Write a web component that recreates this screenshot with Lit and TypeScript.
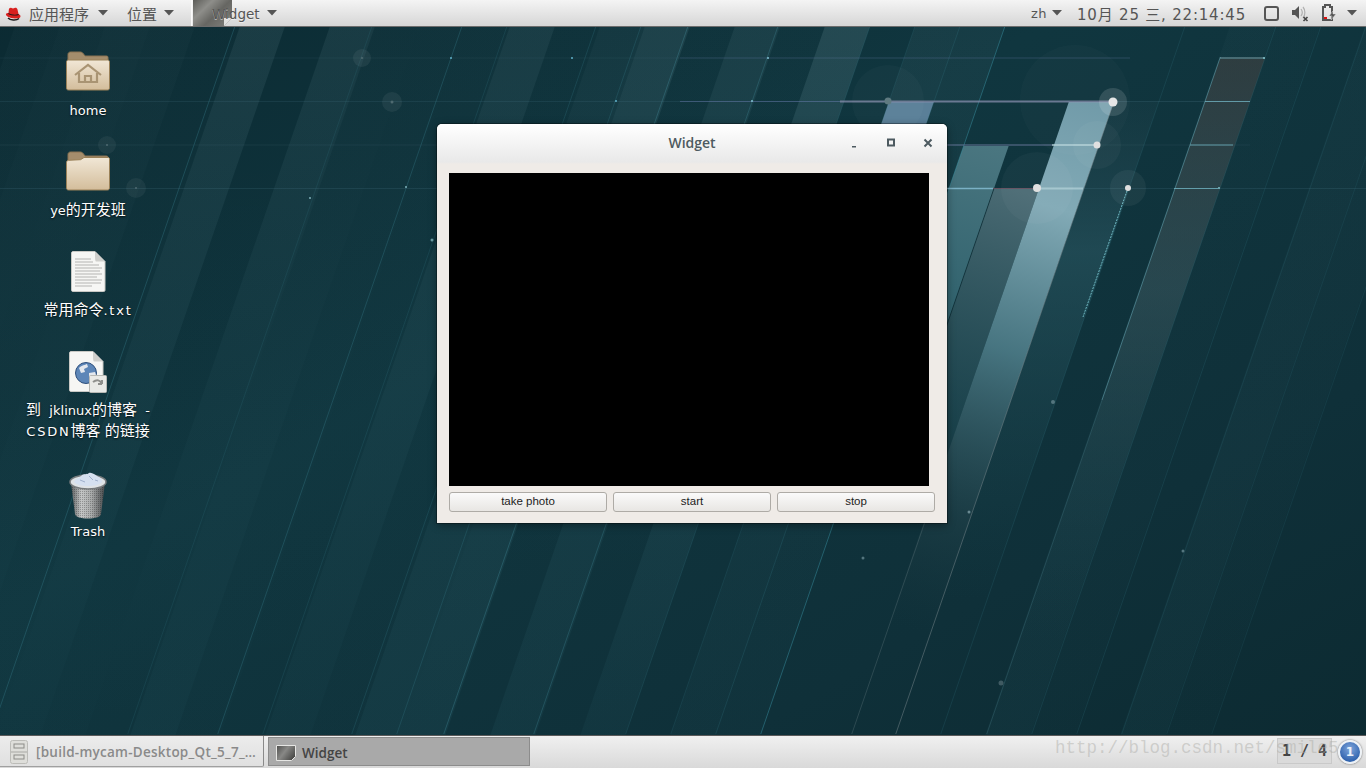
import { LitElement, html, css, svg } from 'lit'
import { customElement } from 'lit/decorators.js'

// wallpaper columns all lean the same way and sit on a 45px grid
const SLOPE = 0.345
const xAt = (x0: number, y: number) => x0 - SLOPE * y

const poly = (x0: number, w: number, y0: number, y1: number, fill: string) => {
	const pts = [
		[xAt(x0, y0), y0],
		[xAt(x0 + w, y0), y0],
		[xAt(x0 + w, y1), y1],
		[xAt(x0, y1), y1],
	]
	return svg`<polygon points=${pts.map((p) => p.join(',')).join(' ')} fill=${fill} />`
}

const edge = (x0: number, y0: number, y1: number, color: string, op = 1, w = 1) =>
	svg`<line x1=${xAt(x0, y0)} y1=${y0} x2=${xAt(x0, y1)} y2=${y1} stroke=${color} stroke-width=${w} opacity=${op} />`

// [x0, opacity at top, opacity at bottom]
const COLUMNS: [number, number, number][] = [
	[24, 0.02, 0.02], [69, 0.03, 0.03], [114, 0.04, 0.01], [159, 0.03, 0.03], [204, 0.01, 0.02],
	[249, 0.08, 0.02], [294, 0, 0.01], [339, 0.07, 0], [384, 0.02, 0.04], [429, 0.02, 0.01],
	[474, 0.02, 0], [519, 0.07, 0.03], [564, 0.01, 0.01], [609, 0.04, 0.06], [654, 0.09, 0.06],
	[699, 0.01, 0], [744, 0.07, 0.05], [789, 0.01, 0], [834, 0.12, 0.04], [924, 0.05, 0.03],
	[969, 0.04, 0.02], [1239, 0.02, 0.04], [1284, 0.01, 0.015], [1374, 0.02, 0.04], [1419, 0.02, 0.015],
]

// [x0, colour, opacity]
const LINES: [number, string, number][] = [
	[244, '#3f8c9c', 0.3], [381, '#3f8c9c', 0.14], [471, '#3f8c9c', 0.28], [516, '#3f8c9c', 0.16],
	[605, '#3f8c9c', 0.2], [650, '#3f8c9c', 0.22], [697, '#4a9aaa', 0.3], [787, '#4a9aaa', 0.26],
	[879, '#3f8c9c', 0.16], [924, '#3f8c9c', 0.14], [969, '#3f8c9c', 0.18], [1014, '#3f9fb2', 0.42],
	[1194, '#3f8c9c', 0.16], [1285, '#3f8c9c', 0.16], [1330, '#3f8c9c', 0.16], [1375, '#3f8c9c', 0.14],
	[1420, '#3f8c9c', 0.12], [1465, '#3f8c9c', 0.12],
]

const HALOS: [number, number, number, number][] = [
	[1075, 100, 55, 0.02], [888, 101, 36, 0.025], [1113, 102, 14, 0.13], [1097, 145, 24, 0.035],
	[1037, 188, 36, 0.03], [1128, 188, 18, 0.05], [362, 58, 9, 0.06], [392, 102, 10, 0.06],
	[107, 145, 9, 0.05], [136, 188, 10, 0.05],
]

const DOTS: [number, number, number, string][] = [
	[1113, 102, 4.5, '#e6e6e6'], [1097, 145, 3.5, '#e0e0e0'], [1037, 188, 4, '#e0e0e0'], [1128, 188, 3, '#e0e0e0'],
	[888, 101, 3.5, '#5f7a80'], [362, 58, 1, '#4f6a70'], [392, 102, 1.5, '#4f6a70'], [107, 145, 1, '#4f6a70'],
	[136, 188, 1, '#4f6a70'], [1053, 402, 2, '#54757e'], [1001, 683, 2.5, '#3f5a62'], [863, 558, 1.5, '#54757e'],
	[1183, 551, 1.5, '#54757e'], [969, 512, 1.5, '#6a8a92'], [310, 198, 1, '#7fb0b8'], [432, 240, 1.5, '#6fa0a8'],
	[406, 187, 1, '#7fb0b8'], [451, 58, 1, '#5fb0c8'], [752, 101, 1, '#7fc0d0'], [768, 58, 1, '#7fc0d0'],
	[616, 101, 1, '#5fb0c8'], [572, 58, 1, '#5fb0c8'], [1264, 58, 1, '#7fc0c8'], [1219, 188, 1, '#7fc0c8'],
]

const wallpaper = html`<svg class="wall" viewBox="0 0 1366 768" width="1366" height="768">
	<defs>
		<linearGradient id="base" x1="0" y1="0" x2="1" y2="1">
			<stop offset="0" stop-color="#0b2a32" />
			<stop offset="0.4" stop-color="#10363f" />
			<stop offset="0.75" stop-color="#0f3039" />
			<stop offset="1" stop-color="#0c2a31" />
		</linearGradient>
		${COLUMNS.map(
			([x, a, b]) => svg`<linearGradient id=${`c${x}`} gradientUnits="userSpaceOnUse" x1="0" y1="27" x2="0" y2="734">
				<stop offset="0" stop-color="#bfe6ee" stop-opacity=${a} />
				<stop offset="1" stop-color="#5fb8c8" stop-opacity=${b} />
			</linearGradient>`,
		)}
		<linearGradient id="hero" gradientUnits="userSpaceOnUse" x1="1090" y1="102" x2="900" y2="730">
			<stop offset="0" stop-color="#6f9aa8" />
			<stop offset="0.17" stop-color="#82aab6" />
			<stop offset="0.4" stop-color="#4d7c88" stop-opacity="0.9" />
			<stop offset="0.68" stop-color="#2a4a52" stop-opacity="0.35" />
			<stop offset="0.85" stop-color="#1d3a42" stop-opacity="0" />
		</linearGradient>
		<linearGradient id="grey" gradientUnits="userSpaceOnUse" x1="1010" y1="188" x2="900" y2="520">
			<stop offset="0" stop-color="#4b6b74" />
			<stop offset="0.8" stop-color="#1d4a54" stop-opacity="0.5" />
			<stop offset="1" stop-color="#1d4a54" stop-opacity="0" />
		</linearGradient>
		<linearGradient id="teal" gradientUnits="userSpaceOnUse" x1="990" y1="146" x2="900" y2="420">
			<stop offset="0" stop-color="#4a7680" />
			<stop offset="1" stop-color="#1f5561" />
		</linearGradient>
		<linearGradient id="side" gradientUnits="userSpaceOnUse" x1="0" y1="102" x2="0" y2="600">
			<stop offset="0" stop-color="#2a4d57" stop-opacity="0.15" />
			<stop offset="0.3" stop-color="#2a5762" stop-opacity="0.6" />
			<stop offset="1" stop-color="#1d4a54" stop-opacity="0" />
		</linearGradient>
		<linearGradient id="rust" gradientUnits="userSpaceOnUse" x1="0" y1="57" x2="0" y2="640">
			<stop offset="0" stop-color="#3a3f40" stop-opacity="0.7" />
			<stop offset="0.4" stop-color="#38545b" stop-opacity="0.55" />
			<stop offset="1" stop-color="#1d4a54" stop-opacity="0" />
		</linearGradient>
	</defs>
	<rect width="1366" height="768" fill="url(#base)" />
	${COLUMNS.map(([x]) => poly(x, 45, 0, 768, `url(#c${x})`))}
	${poly(924, 45, 102, 124, '#5a7f98')}
	${poly(1014, 45, 146, 420, 'url(#teal)')}
	${poly(1059, 45, 188, 540, 'url(#grey)')}
	${poly(1104, 45, 102, 768, 'url(#hero)')}
	${poly(1149, 45, 102, 600, 'url(#side)')}
	${poly(1240, 45, 57, 640, 'url(#rust)')}
	${LINES.map(([x, c, o]) => edge(x, 27, 734, c, o))}
	${edge(1240, 57, 400, '#6fb2c0', 0.5)}
	${edge(1240, 400, 734, '#6fb2c0', 0.18)}
	${edge(1059, 188, 400, '#0b2a32', 0.7)}
	${edge(1105, 480, 734, '#70858a', 0.3)}
	${edge(1149, 102, 734, '#78878c', 0.5)}
	<line x1="1128" y1="188" x2="1083" y2="317" stroke="#7fd0da" stroke-dasharray="2 1" opacity="0.85" />
	<g stroke="#5f8ea0" stroke-width="1" fill="none">
		<line x1="0" y1="58" x2="680" y2="58" opacity="0.1" />
		<line x1="680" y1="58" x2="1130" y2="58" stroke="#6a7db0" opacity="0.3" />
		<line x1="1220" y1="58" x2="1265" y2="58" stroke="#6fb2c0" opacity="0.8" />
		<line x1="0" y1="101.5" x2="680" y2="101.5" opacity="0.14" />
		<line x1="680" y1="101.5" x2="840" y2="101.5" stroke="#6a7db0" opacity="0.5" />
		<line x1="840" y1="101.5" x2="1113" y2="101.5" stroke="#8f93b4" stroke-width="2" opacity="0.7" />
		<line x1="1113" y1="101.5" x2="1205" y2="101.5" opacity="0.2" />
		<line x1="1205" y1="101.5" x2="1250" y2="101.5" stroke="#6fb2c0" opacity="0.8" />
		<line x1="0" y1="145" x2="1250" y2="145" opacity="0.12" />
		<line x1="946" y1="145" x2="1052" y2="145" stroke="#7d87b0" opacity="0.7" />
		<line x1="1052" y1="145" x2="1097" y2="145" stroke="#b6d4dc" stroke-width="2" opacity="0.7" />
		<line x1="1190" y1="145" x2="1233" y2="145" stroke="#6fb2c0" opacity="0.8" />
		<line x1="0" y1="188.5" x2="1366" y2="188.5" opacity="0.16" />
		<line x1="946" y1="188.5" x2="993" y2="188.5" stroke="#7fb8cc" stroke-width="1.5" opacity="0.9" />
		<line x1="993" y1="188.5" x2="1037" y2="188.5" stroke="#6a4a5a" opacity="0.8" />
		<line x1="1037" y1="188.5" x2="1083" y2="188.5" stroke="#b6d4dc" stroke-width="2" opacity="0.7" />
		<line x1="1174" y1="188.5" x2="1218" y2="188.5" stroke="#6fb2c0" opacity="0.8" />
	</g>
	${HALOS.map(([x, y, r, o]) => svg`<circle cx=${x} cy=${y} r=${r} fill="#fff" opacity=${o} />`)}
	${DOTS.map(([x, y, r, c]) => svg`<circle cx=${x} cy=${y} r=${r} fill=${c} />`)}
</svg>`

const folderDefs = svg`<defs><linearGradient id="fld" x1="0" y1="0" x2="0" y2="1"><stop offset="0" stop-color="#f1e7d6" /><stop offset="1" stop-color="#d3bd9b" /></linearGradient></defs>`
const folderBack = svg`<path d="M3 6.5C3 5 4 4 5.5 4H15c1.500 0 2.500.6 3.400 1.800L20 8h21.500c1 0 1.500.5 1.500 1.500V22H3z" fill="#a48d6c" stroke="#8a7352" />`

const homeIcon = html`<svg width="46" height="44" viewBox="0 2 46 44">
	${folderDefs}${folderBack}
	<path d="M1.5 14c0-1.200.7-2 2-2h39c1.300 0 2 .8 2 2v26c0 1.300-.7 2-2 2h-39c-1.300 0-2-.7-2-2z" fill="url(#fld)" stroke="#9a8158" />
	<path d="M10 27l13-10 13 10M14 25v9h18v-9M20 34v-6h6v6" fill="none" stroke="#a99473" stroke-width="2.2" />
</svg>`

const folderIcon = html`<svg width="46" height="42" viewBox="0 2 46 42">
	${folderDefs}${folderBack}
	<path d="M1.5 14.500c0-1.200.7-2 2-2.200l12-.6L19 9.500h24c1 0 1.500.6 1.500 1.500v29c0 1.300-.8 2-2 2H3.500c-1.300 0-2-.8-2-2z" fill="url(#fld)" stroke="#9a8158" />
</svg>`

const page = svg`
	<path d="M1.5 3c0-1 .6-1.500 1.500-1.500h22l10 10V40c0 1-.5 1.500-1.500 1.500H3c-1 0-1.500-.5-1.500-1.500z" fill="#f6f6f4" stroke="#c8c8c4" />
	<path d="M25 1.500c0 6 0 10 1 10h9z" fill="#cfcfcc" />`

const textIcon = html`<svg width="37" height="43" viewBox="0 0 37 43">
	${page}
	<path d="M5 9h16M5 12h18M5 15h24M5 18h27M5 21h25M5 24h27M5 27h22M5 30h27M5 33h26M5 36h17" stroke="#b4b4b2" />
</svg>`

const linkIcon = html`<svg width="40" height="44" viewBox="0 0 40 44">
	${page}
	<circle cx="18" cy="23" r="10.5" fill="#5d86b8" stroke="#2e4f7c" />
	<path d="M11 18c3-3 6-3 8-4l1 3-4 2 1 3-4 1zM21 23l6-1 1 3-4 6-3-3z" fill="#e4e8ee" />
	<rect x="21.5" y="25.5" width="17" height="17" rx="1" fill="#e9e9e6" stroke="#b8b8b4" />
	<path d="M25 32c4-3 7-2 9 2M34 34v-4M34 34h-4" fill="none" stroke="#8f8f8c" stroke-width="2" />
</svg>`

const trashIcon = html`<svg width="40" height="48" viewBox="0 0 40 48">
	<defs>
		<linearGradient id="can" x1="0" y1="0" x2="1" y2="0">
			<stop offset="0" stop-color="#5c5f60" />
			<stop offset="0.3" stop-color="#c4c6c6" />
			<stop offset="0.6" stop-color="#a8aaaa" />
			<stop offset="1" stop-color="#45484a" />
		</linearGradient>
		<pattern id="mesh" width="2" height="2" patternUnits="userSpaceOnUse">
			<rect width="1" height="1" fill="#000" opacity="0.25" />
		</pattern>
	</defs>
	<path d="M3 12l4 31c.3 3 6 4.500 13 4.500s12.700-1.500 13-4.500l4-31z" fill="url(#can)" />
	<path d="M3 12l4 31c.3 3 6 4.500 13 4.500s12.700-1.500 13-4.500l4-31z" fill="url(#mesh)" />
	<ellipse cx="20" cy="11" rx="18" ry="7" fill="#dfe3e6" stroke="#777b7d" stroke-width="1.5" />
	<path d="M6 11c2-4 5-3 7-6 3-3 6-1 8-3 3-1 6 2 8 3 3 1 5 3 5 6-3 3-8 4-14 4s-11-1-14-4z" fill="#d5e0f0" />
	<path d="M12 9l5 2M21 5l4 4M27 9l3 1" stroke="#9fb0cc" fill="none" />
</svg>`

const caret = () => html`<svg class="caret" width="10" height="6" viewBox="0 0 10 6"><path d="M0 0h10L5 5.500z" fill="#555" /></svg>`

const redHat = html`<svg width="16" height="15" viewBox="0 0 16 15">
	<ellipse cx="8" cy="10.5" rx="6.5" ry="4" fill="#ececec" />
	<path d="M1 8c-.5 1.500 2 3.500 7 4.300 5 .8 7.500-.3 7.500-2 0-1-1-1.800-2-2.300L12.500 3.500C12 2 11 1.500 9.500 2 8.500 2.500 7.500 2.500 6.500 2 5 1.500 4 2.500 3.800 4L3.500 7C2.500 7 1.300 7.300 1 8z" fill="#d8201f" />
	<path d="M3.500 7c2.500 1.500 6.500 2.500 10 1l.3 1c-3.500 1.200-7.500.5-10.500-1z" fill="#1a1a1a" />
	<path d="M3 12c2 2 8 3 11 .5" fill="none" stroke="#1a1a1a" stroke-width="1.5" />
</svg>`

const thumb = html`<svg class="thumb" width="41" height="26" viewBox="0 0 41 26">
	<defs>
		<linearGradient id="th" x1="0" y1="0" x2="1" y2="0.7">
			<stop offset="0" stop-color="#5c5c58" />
			<stop offset="0.35" stop-color="#8e8e8a" />
			<stop offset="0.65" stop-color="#666662" />
			<stop offset="1" stop-color="#7a7a76" />
		</linearGradient>
	</defs>
	<path d="M2 0h39v18l-8 8H2z" fill="url(#th)" />
	<path d="M33 26l8-8h-8z" fill="#e0e0de" />
	<path d="M0 0h1.5v26H0z" fill="#fafafa" />
</svg>`

const cabinet = html`<svg class="tico" width="18" height="24" viewBox="0 0 18 24">
	<rect x="0.5" y="0.5" width="17" height="23" rx="2" fill="#dedeDA" stroke="#bcbcb8" />
	<path d="M1 12h16" stroke="#a8a8a4" />
	<rect x="4" y="4" width="10" height="4" fill="none" stroke="#8c8c88" />
	<rect x="4" y="15" width="10" height="4" fill="none" stroke="#8c8c88" />
</svg>`

const taskThumb = html`<svg class="tico" width="20" height="16" viewBox="0 0 20 16">
	<defs>
		<linearGradient id="tt" x1="0" y1="0" x2="1" y2="0.6">
			<stop offset="0" stop-color="#4e4e4c" />
			<stop offset="0.5" stop-color="#888886" />
			<stop offset="1" stop-color="#4c4c4a" />
		</linearGradient>
	</defs>
	<path d="M.5 .5h19v11l-4 4H.5z" fill="url(#tt)" stroke="#e6e6e4" />
</svg>`

@customElement('app-root')
export class AppRoot extends LitElement {
	static styles = css`
		:host {
			display: flex;
			flex-direction: column;
			position: relative;
			width: 1366px;
			height: 768px;
			overflow: hidden;
			font-family: 'DejaVu Sans', 'Noto Sans CJK SC', sans-serif;
		}
		.wall {
			position: absolute;
			inset: 0;
		}

		.top {
			position: relative;
			display: flex;
			align-items: center;
			height: 26px;
			flex: none;
			background: linear-gradient(#f4f4f4, #d6d6d6);
			border-bottom: 1px solid #6c6c6c;
			color: #555;
			font-size: 15px;
		}
		.caret {
			display: block;
			flex: none;
		}
		.menu {
			display: flex;
			align-items: center;
			gap: 7px;
			white-space: nowrap;
		}
		.apps {
			margin-left: 5px;
			gap: 9px;
			font-family: 'Noto Sans CJK SC', sans-serif;
		}
		.apps svg:first-child {
			margin-right: -1px;
		}
		.places {
			margin-left: 19px;
			font-family: 'Noto Sans CJK SC', sans-serif;
		}
		.winitem {
			position: relative;
			height: 26px;
			margin-left: 17px;
			padding-left: 21px;
			font-size: 13.5px;
		}
		.thumb {
			position: absolute;
			left: 0;
			top: 0;
		}
		.winitem span {
			position: relative;
			top: 1px;
			text-shadow: 0 1px 0 rgba(255, 255, 255, 0.5);
		}
		.spacer {
			flex: 1;
		}
		.tray {
			display: flex;
			align-items: center;
			margin-right: 9px;
		}
		.lang {
			display: flex;
			align-items: center;
			gap: 5px;
			font-size: 13px;
			letter-spacing: 0.5px;
		}
		.clock {
			margin: 0 18px 0 15px;
			font-size: 15px;
			letter-spacing: 0.8px;
			white-space: nowrap;
		}
		.trayicons {
			display: flex;
			align-items: center;
			gap: 12px;
		}
		.trayicons .caret {
			margin-left: -2px;
		}

		.desk {
			position: relative;
			flex: 1;
			min-height: 0;
		}
		.icons {
			display: flex;
			flex-direction: column;
			gap: 29px;
			width: 176px;
			padding-top: 23px;
			align-items: center;
		}
		.item {
			display: flex;
			flex-direction: column;
			align-items: center;
			width: 130px;
		}
		.glyph {
			display: flex;
			align-items: flex-start;
			justify-content: center;
			height: 48px;
			margin-bottom: 2px;
		}
		.label {
			color: #fff;
			font-size: 13px;
			line-height: 21px;
			text-align: center;
			white-space: nowrap;
			text-shadow: 0 1px 2px rgba(0, 0, 0, 0.8);
		}
		.cjk {
			font-family: 'Noto Sans CJK SC', sans-serif;
			font-size: 15px;
			line-height: 1;
		}
		.wide {
			letter-spacing: 1.8px;
		}

		/* window sits on the free desktop canvas */
		.win {
			position: absolute;
			left: 437px;
			top: 97px;
			width: 510px;
			height: 399px;
			box-sizing: border-box;
			display: flex;
			flex-direction: column;
			background: #efebe7;
			border-radius: 5px 5px 0 0;
			box-shadow: 0 0 0 1px rgba(0, 0, 0, 0.3), 0 2px 8px rgba(0, 0, 0, 0.4);
		}
		.title {
			position: relative;
			display: flex;
			align-items: center;
			justify-content: center;
			height: 40px;
			padding-bottom: 4px;
			box-sizing: border-box;
			flex: none;
			background: linear-gradient(#ffffff, #e9e9e9 95%, #efebe7);
			border-radius: 5px 5px 0 0;
			color: #4d5a60;
			font-family: 'Open Sans', sans-serif;
			font-weight: 600;
			font-size: 14px;
		}
		.ctrls {
			position: absolute;
			right: 14px;
			top: 14px;
			display: flex;
			gap: 27px;
		}
		.ctrls svg {
			display: block;
		}
		.body {
			flex: 1;
			padding: 9px 11px 0 12px;
			display: flex;
			flex-direction: column;
		}
		.video {
			width: 480px;
			height: 313px;
			background: #000;
		}
		.btns {
			display: flex;
			gap: 6px;
			margin-top: 6px;
		}
		.btn {
			width: 158px;
			height: 20px;
			box-sizing: border-box;
			border: 1px solid #aeaba6;
			border-radius: 3px;
			background: linear-gradient(#fafafa, #e8e6e3);
			color: #222;
			font-family: 'Liberation Sans', sans-serif;
			font-size: 11.5px;
			line-height: 16px;
			text-align: center;
		}

		.bottom {
			position: relative;
			display: flex;
			align-items: stretch;
			flex: none;
			height: 32px;
			border-top: 1px solid #5a5a5a;
			background: linear-gradient(#f0f0f0, #d9d9d9);
			font-family: 'Open Sans', sans-serif;
			font-size: 13.5px;
			font-weight: 600;
			color: #8a8a8a;
		}
		.tico {
			flex: none;
		}
		.task {
			display: flex;
			align-items: center;
			box-sizing: border-box;
			white-space: nowrap;
			padding-top: 2px;
		}
		.task.idle {
			width: 264px;
			gap: 8px;
			padding-left: 10px;
			margin-bottom: 1px;
			background: linear-gradient(#ececec, #e0e0e0);
			border-right: 1px solid #8a8a8a;
			border-bottom: 1px solid #a0a0a0;
			border-radius: 0 0 2px 0;
			letter-spacing: 0.25px;
		}
		.task.active {
			width: 262px;
			gap: 6px;
			margin: 1px 0 2px 4px;
			padding-left: 7px;
			background: #a9a9a9;
			border: 1px solid #8c8c8c;
			color: #444;
		}
		.pager {
			display: flex;
			align-items: center;
			justify-content: center;
			width: 55px;
			height: 26px;
			box-sizing: border-box;
			margin: 2px 6px 0 auto;
			border: 1px solid #c9c9c9;
			background: #dadada;
			color: #444;
			font-family: 'DejaVu Sans Mono', monospace;
			font-size: 15px;
			font-weight: 700;
		}
		.badge {
			position: relative;
			width: 24px;
			height: 24px;
			margin: 4px 4px 0 0;
			box-sizing: border-box;
			border-radius: 50%;
			border: 2px solid #eef2f6;
			background: radial-gradient(circle at 50% 35%, #7fa6dc, #2f62ad 75%);
			box-shadow: 0 0 2px rgba(0, 0, 0, 0.6);
			color: #e8f0fa;
			font-family: 'DejaVu Sans', sans-serif;
			font-size: 12px;
			line-height: 20px;
			text-align: center;
		}
		/* csdn watermark stamped across the shot */
		.mark {
			position: absolute;
			left: 1055px;
			top: 736px;
			font-family: 'Liberation Mono', monospace;
			font-size: 17.5px;
			line-height: 24px;
			white-space: nowrap;
			color: rgba(170, 170, 165, 0.45);
		}
	`

	render() {
		return html`
			${wallpaper}
			<div class="top">
				<div class="menu apps">${redHat}<span>应用程序</span>${caret()}</div>
				<div class="menu places"><span>位置</span>${caret()}</div>
				<div class="menu winitem">${thumb}<span>Widget</span>${caret()}</div>
				<div class="spacer"></div>
				<div class="tray">
					<div class="lang"><span>zh</span>${caret()}</div>
					<div class="clock">10月 25 三, 22:14:45</div>
					<div class="trayicons">
						<svg width="15" height="15" viewBox="0 0 15 15">
							<rect x="1" y="1" width="13" height="13" rx="2" fill="none" stroke="#555" stroke-width="2" />
						</svg>
						<svg width="18" height="18" viewBox="0 0 18 18">
							<path d="M1 6h3l4-4v13l-4-4H1z" fill="#555" />
							<path d="M10 5c1.500 2 1.500 5 0 7M12 3c2.500 3 2.500 8 0 11" fill="none" stroke="#b0b0b0" stroke-width="1.2" />
							<path d="M12.5 13l4 4M16.500 13l-4 4" stroke="#444" stroke-width="1.6" />
						</svg>
						<svg width="16" height="18" viewBox="0 0 16 18">
							<path d="M2 3h2V1h5v2h2v13H2z" fill="none" stroke="#555" stroke-width="2" />
							<rect x="3" y="13" width="3" height="2" fill="#e01010" />
							<path d="M12 7l-4 5h3l-1 4 5-6h-3z" fill="#555" stroke="#e0e0e0" stroke-width="0.5" />
						</svg>
						${caret()}
					</div>
				</div>
			</div>

			<div class="desk">
				<div class="icons">
					<div class="item"><div class="glyph">${homeIcon}</div><div class="label">home</div></div>
					<div class="item">
						<div class="glyph">${folderIcon}</div>
						<div class="label">ye<span class="cjk">的开发班</span></div>
					</div>
					<div class="item">
						<div class="glyph">${textIcon}</div>
						<div class="label"><span class="cjk">常用命令</span><span class="wide">.txt</span></div>
					</div>
					<div class="item">
						<div class="glyph">${linkIcon}</div>
						<div class="label">
							<span class="cjk">到</span>&nbsp; jklinux<span class="cjk">的博客</span>&nbsp; -<br />
							<span class="wide">CSDN</span><span class="cjk">博客</span>&nbsp;<span class="cjk">的链接</span>
						</div>
					</div>
					<div class="item"><div class="glyph">${trashIcon}</div><div class="label">Trash</div></div>
				</div>

				<div class="win">
					<div class="title">
						<span>Widget</span>
						<div class="ctrls">
							<svg width="10" height="10" viewBox="0 0 10 10"><path d="M3 8h4v1.5H3z" fill="#4d5a60" /></svg>
							<svg width="10" height="10" viewBox="0 0 10 10">
								<rect x="2" y="1.5" width="6" height="6" fill="none" stroke="#4d5a60" stroke-width="2" />
							</svg>
							<svg width="10" height="10" viewBox="0 0 10 10">
								<path d="M1.5 1.5l7 7M8.5 1.5l-7 7" stroke="#4d5a60" stroke-width="2" />
							</svg>
						</div>
					</div>
					<div class="body">
						<div class="video"></div>
						<div class="btns">
							<div class="btn">take photo</div>
							<div class="btn">start</div>
							<div class="btn">stop</div>
						</div>
					</div>
				</div>
			</div>

			<div class="bottom">
				<div class="task idle">${cabinet}<span>[build-mycam-Desktop_Qt_5_7_…</span></div>
				<div class="task active">${taskThumb}<span>Widget</span></div>
				<div class="pager">1 / 4</div>
				<div class="badge">1</div>
			</div>
			<div class="mark">http://blog.csdn.net/smile5</div>
		`
	}
}
